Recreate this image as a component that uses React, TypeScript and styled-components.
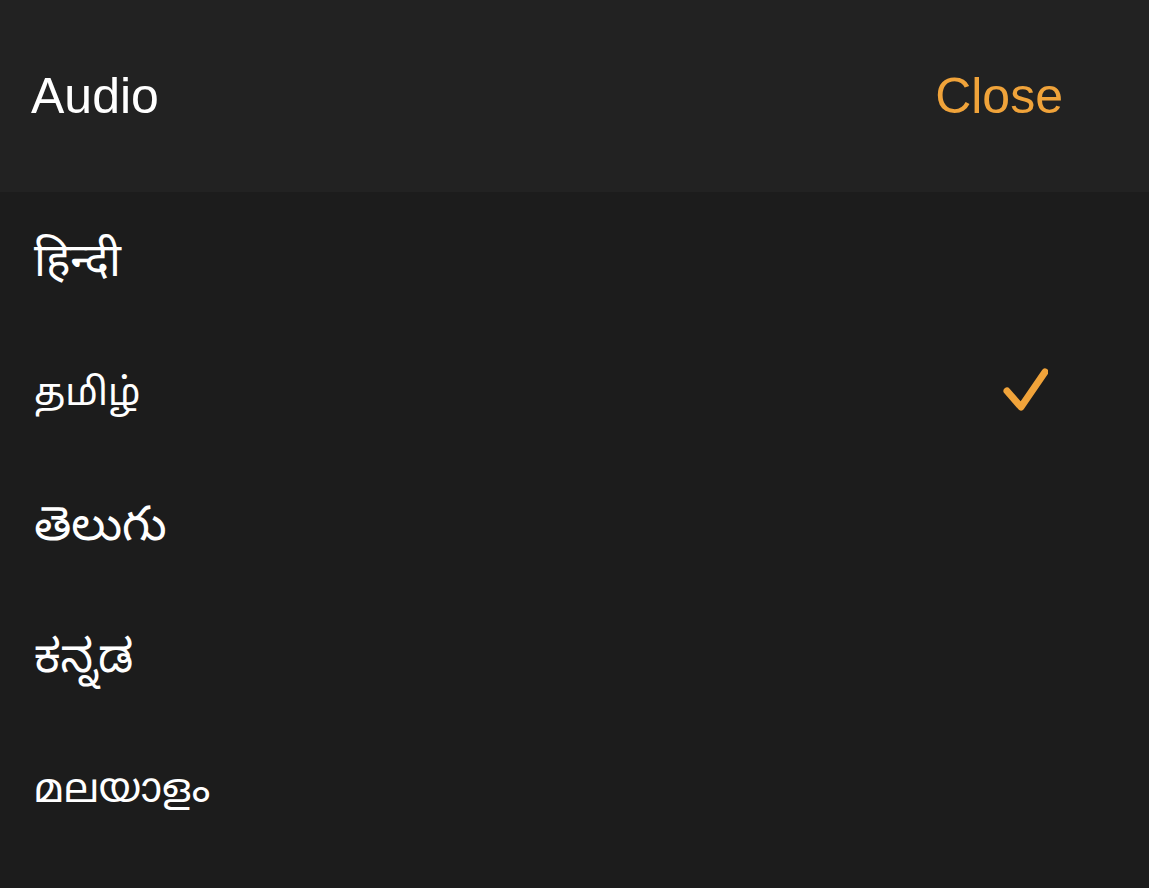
import React from "react";
import styled, { createGlobalStyle } from "styled-components";

const Global = createGlobalStyle`
  html, body { margin: 0; padding: 0; background: #1c1c1c; }
  body { font-family: "Liberation Sans", "Noto Sans", Arial, sans-serif; -webkit-font-smoothing: antialiased; }
`;

const Screen = styled.div`
  width: 1149px;
  height: 888px;
  background: #1c1c1c;
  display: flex;
  flex-direction: column;
  overflow: hidden;
`;

const Header = styled.header`
  height: 192px;
  flex: none;
  background: #222222;
  display: flex;
  align-items: center;
  justify-content: space-between;
  padding: 0 86px 0 31px;
  box-sizing: border-box;
`;

const Title = styled.h1`
  margin: 0;
  font-size: 50px;
  font-weight: 400;
  color: #ffffff;
  line-height: 1;
`;

const CloseButton = styled.button`
  background: none;
  border: 0;
  padding: 0;
  font-family: inherit;
  font-size: 50px;
  color: #f0a33a;
  line-height: 1;
  cursor: pointer;
`;

const List = styled.ul`
  list-style: none;
  margin: 0;
  padding: 0;
  display: flex;
  flex-direction: column;
`;

const Row = styled.li`
  height: 132px;
  display: flex;
  align-items: center;
  justify-content: space-between;
  padding: 0 101px 0 34px;
  box-sizing: border-box;
`;

const Label = styled.span<{ $size: number }>`
  font-family: "Noto Sans", "Noto Sans Devanagari", "Noto Sans Tamil", "Noto Sans Telugu",
    "Noto Sans Kannada", "Noto Sans Malayalam", "Lohit Devanagari", sans-serif;
  font-size: ${(p) => p.$size}px;
  color: #ffffff;
  line-height: 1;
`;

const Check = () => (
  <svg width="46" height="46" viewBox="0 0 46 46" fill="none">
    <path
      d="M5 24 L19 40 L43 5"
      stroke="#f0a33a"
      strokeWidth="7"
      strokeLinecap="round"
      strokeLinejoin="round"
    />
  </svg>
);

const languages = [
  { name: "हिन्दी", size: 46, selected: false },
  { name: "தமிழ்", size: 38, selected: true },
  { name: "తెలుగు", size: 48, selected: false },
  { name: "ಕನ್ನಡ", size: 46, selected: false },
  { name: "മലയാളം", size: 41, selected: false },
];

export default function App() {
  return (
    <>
      <Global />
      <Screen>
        <Header>
          <Title>Audio</Title>
          <CloseButton>Close</CloseButton>
        </Header>
        <List>
          {languages.map((l) => (
            <Row key={l.name}>
              <Label $size={l.size}>{l.name}</Label>
              {l.selected && <Check />}
            </Row>
          ))}
        </List>
      </Screen>
    </>
  );
}
